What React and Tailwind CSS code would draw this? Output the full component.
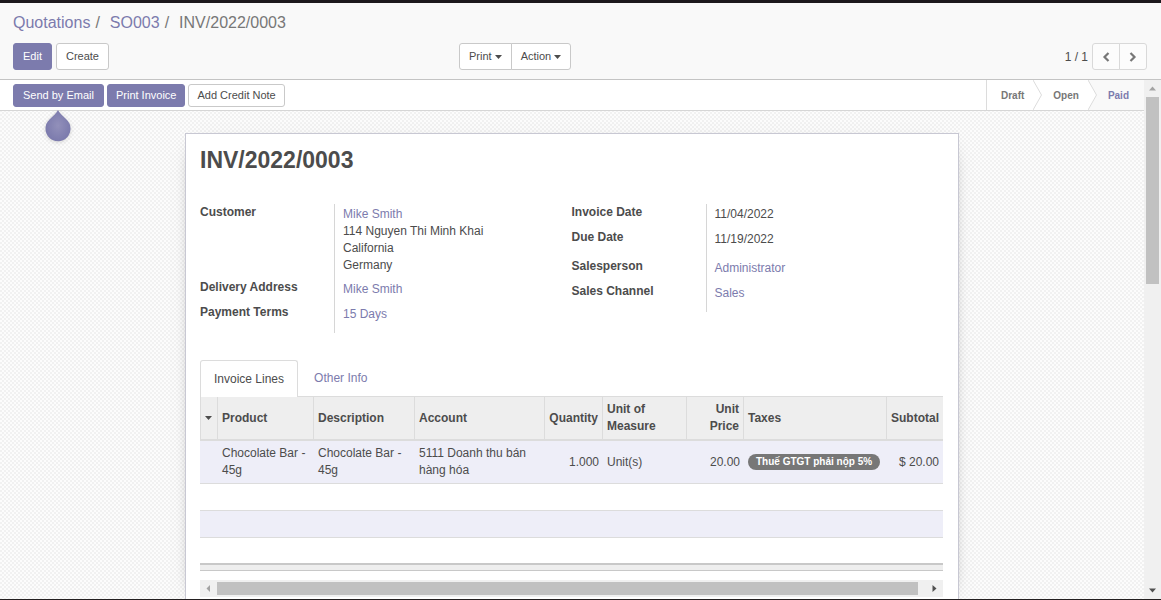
import React from "react";

const PRIMARY =
  "rounded-[3px] border border-[#7c7bad] bg-[#7c7bad] text-[11px] text-white";
const PLAIN =
  "rounded-[3px] border border-[#c9c9c9] bg-white text-[11px] text-[#4c4c4c]";
const LINK = "text-[#7c7bad]";

function Caret() {
  return (
    <svg width="7" height="4" viewBox="0 0 7 4" className="shrink-0" aria-hidden="true">
      <path d="M0 0h7L3.5 4z" fill="currentColor" />
    </svg>
  );
}

function Chevron({ d }) {
  return (
    <svg width="8" height="10" viewBox="0 0 8 10" aria-hidden="true">
      <path d={d} fill="none" stroke="currentColor" strokeWidth="2.2" />
    </svg>
  );
}

function Arrow({ d, className }) {
  return (
    <svg width="7" height="7" viewBox="0 0 7 7" className={className} aria-hidden="true">
      <path d={d} fill="currentColor" />
    </svg>
  );
}

const MENU =
  "flex h-[27px] items-center gap-[3px] border border-[#c9c9c9] bg-white px-[9px] text-[11px]";
const PAGER =
  "flex h-[27px] w-7 items-center justify-center border border-[#d9d9d9] bg-[#fcfcfc] text-[#777]";

function ControlPanel() {
  return (
    <header className="border-b border-[#c4c4c4] bg-[#f9f9f9] pt-2 pr-[14px] pb-[9px] pl-[13px]">
      <nav className="flex h-6 items-center text-[16px] text-[#777]">
        <a href="#quotations" className={LINK}>Quotations</a>
        <span className="pr-[10px] pl-[5px]">/</span>
        <a href="#so003" className={LINK}>SO003</a>
        <span className="pr-[10px] pl-[5px]">/</span>
        <span>INV/2022/0003</span>
      </nav>
      <div className="mt-2 grid grid-cols-[446px_1fr_auto] items-center">
        <div className="flex gap-1">
          <button className={`${PRIMARY} h-[27px] px-[9px]`}>Edit</button>
          <button className={`${PLAIN} h-[27px] px-[9px]`}>Create</button>
        </div>
        <div className="flex">
          <button className={`${MENU} rounded-l-[3px]`}>Print <Caret /></button>
          <button className={`${MENU} -ml-px rounded-r-[3px]`}>Action <Caret /></button>
        </div>
        <div className="flex items-center">
          <span className="pr-1">1 / 1</span>
          <button aria-label="Previous" className={`${PAGER} rounded-l-[3px]`}>
            <Chevron d="M6.500 1L2.500 5L6.500 9" />
          </button>
          <button aria-label="Next" className={`${PAGER} -ml-px rounded-r-[3px]`}>
            <Chevron d="M1.500 1L5.500 5L1.500 9" />
          </button>
        </div>
      </div>
    </header>
  );
}

function StepArrow({ next }) {
  return (
    <svg width="9" height="30" viewBox="0 0 9 30" className="shrink-0" aria-hidden="true">
      <rect width="9" height="30" fill={next} />
      <path d="M0 0L8.500 15L0 30z" fill="#fff" />
      <path d="M0 0L8.500 15L0 30" fill="none" stroke="#dcdcdc" />
    </svg>
  );
}

function StatusBar() {
  return (
    <div className="flex h-[31px] items-stretch justify-between border-b border-[#d6d6d6] bg-white">
      <div className="flex items-center gap-[3px] pl-[13px]">
        <div className="relative">
          <button className={`${PRIMARY} block h-[23px] px-[9px]`}>Send by Email</button>
          <svg
            width="33"
            height="38"
            viewBox="0 0 33 38"
            className="absolute top-full left-1/2 z-10 mt-[3px] -translate-x-1/2 drop-shadow-sm"
            aria-hidden="true"
          >
            <defs>
              <radialGradient id="drop">
                <stop offset="0" stopColor="#9290ba" />
                <stop offset="1" stopColor="#7c7bad" />
              </radialGradient>
            </defs>
            <path
              d="M16.500 0C18 3 21 5.500 25 9.500A12.500 12.500 0 1 1 8 9.500C12 5.500 15 3 16.500 0z"
              fill="url(#drop)"
            />
          </svg>
        </div>
        <button className={`${PRIMARY} h-[23px] px-2`}>Print Invoice</button>
        <button className={`${PLAIN} h-[23px] px-2`}>Add Credit Note</button>
      </div>
      <ol className="flex items-center border-l border-[#dcdcdc] text-[10px] font-bold text-[#777]">
        <li className="pr-[9px] pl-[14px]">Draft</li>
        <li className="flex items-center">
          <StepArrow next="#fff" />
          <span className="pr-[9px] pl-[11px]">Open</span>
        </li>
        <li className="flex items-center bg-[#f9f9f9]">
          <StepArrow next="#f9f9f9" />
          <span className={`${LINK} pr-[15px] pl-[11px]`}>Paid</span>
        </li>
      </ol>
    </div>
  );
}

function Field({ label, children, pad = "pb-[6px]" }) {
  return (
    <>
      <dt className="font-bold">{label}</dt>
      <dd className={`border-l border-[#d6d6d6] pt-[2px] pl-2 ${pad}`}>{children}</dd>
    </>
  );
}

const GROUP = "grid grid-cols-[134px_1fr] content-start leading-[17px]";

function Details() {
  return (
    <div className="mt-[29px] grid grid-cols-2">
      <dl className={GROUP}>
        <Field label="Customer" pad="pb-[5px]">
          <a href="#customer" className={LINK}>Mike Smith</a>
          <br />114 Nguyen Thi Minh Khai
          <br />California
          <br />Germany
        </Field>
        <Field label="Delivery Address"><a href="#delivery" className={LINK}>Mike Smith</a></Field>
        <Field label="Payment Terms" pad="pb-[10px]"><a href="#terms" className={LINK}>15 Days</a></Field>
      </dl>
      <dl className={GROUP}>
        <Field label="Invoice Date">11/04/2022</Field>
        <Field label="Due Date" pad="pb-[10px]">11/19/2022</Field>
        <Field label="Salesperson"><a href="#salesperson" className={LINK}>Administrator</a></Field>
        <Field label="Sales Channel" pad="pb-[10px]"><a href="#channel" className={LINK}>Sales</a></Field>
      </dl>
    </div>
  );
}

const TH = "border-r border-[#dcdcdc] px-1 font-bold";

function InvoiceLines() {
  return (
    <table className="w-full table-fixed border-separate border-spacing-0 text-left leading-[17px]">
      <colgroup>
        <col className="w-[18px]" />
        <col className="w-[96px]" />
        <col className="w-[101px]" />
        <col className="w-[130px]" />
        <col className="w-[58px]" />
        <col className="w-[84px]" />
        <col className="w-[57px]" />
        <col className="w-[143px]" />
        <col />
      </colgroup>
      <thead className="bg-[#eee]">
        <tr className="h-11 [&>th]:border-b-2 [&>th]:border-b-[#dcdcdc]">
          <th className="border-x border-[#dcdcdc] pl-1 align-middle" aria-label="Sort"><Caret /></th>
          <th className={TH}>Product</th>
          <th className={TH}>Description</th>
          <th className={TH}>Account</th>
          <th className={`${TH} text-right whitespace-nowrap`}>Quantity</th>
          <th className={TH}>Unit of Measure</th>
          <th className={`${TH} text-right`}>Unit Price</th>
          <th className={TH}>Taxes</th>
          <th className="px-1 text-right font-bold">Subtotal</th>
        </tr>
      </thead>
      <tbody className="[&_td]:border-b [&_td]:border-[#dcdcdc] [&_td]:px-1">
        <tr className="h-[43px] bg-[#eeeef8]">
          <td />
          <td>Chocolate Bar - 45g</td>
          <td>Chocolate Bar - 45g</td>
          <td>5111 Doanh thu bán hàng hóa</td>
          <td className="text-right">1.000</td>
          <td>Unit(s)</td>
          <td className="text-right">20.00</td>
          <td>
            <span className="inline-block h-4 rounded-full bg-[#777] px-2 align-middle text-[10px] leading-4 font-bold whitespace-nowrap text-white">
              Thuế GTGT phải nộp 5%
            </span>
          </td>
          <td className="text-right whitespace-nowrap">$ 20.00</td>
        </tr>
        <tr className="h-[27px]"><td colSpan={9} /></tr>
        <tr className="h-[27px] bg-[#eeeef8]"><td colSpan={9} /></tr>
      </tbody>
      <tfoot>
        <tr className="h-[25px]"><td colSpan={9} /></tr>
        <tr className="h-2"><td colSpan={9} className="border-t-2 border-b border-[#c8c8c8] bg-[#eee]" /></tr>
      </tfoot>
    </table>
  );
}

function Sheet() {
  return (
    <main className="mx-auto mt-[22px] w-full max-w-[774px] flex-1 border border-b-0 border-[#c8c8d3] bg-white pr-[15px] pl-[14px] shadow-[0_5px_20px_-15px_#000]">
      <h1 className="mt-3 text-[23px] leading-[29px] font-bold">INV/2022/0003</h1>
      <Details />
      <div role="tablist" className="mt-[27px] flex h-[37px] border-b border-[#dcdcdc]">
        <button role="tab" aria-selected="true" className="-mb-px rounded-t-[3px] border border-b-0 border-[#dcdcdc] bg-white px-[13px]">
          Invoice Lines
        </button>
        <button role="tab" aria-selected="false" className={`${LINK} px-4`}>Other Info</button>
      </div>
      <InvoiceLines />
      <div className="mt-[9px] flex h-[17px] items-center bg-[#f0f0f0]">
        <span className="flex w-[17px] justify-center"><Arrow d="M5 0v7L1.500 3.500z" className="text-[#a3a3a3]" /></span>
        <span className="h-[13px] flex-1 bg-[#c1c1c1]" />
        <span className="flex w-[25px] justify-end pr-[5px]"><Arrow d="M1.500 0v7L5.500 3.500z" className="text-[#505050]" /></span>
      </div>
    </main>
  );
}

export default function App() {
  return (
    <div className="flex h-screen flex-col overflow-hidden border-t-3 border-b border-t-[#1c181c] border-b-[#231f20] bg-white font-['Liberation_Sans',Arial,sans-serif] text-[12px] text-[#4c4c4c]">
      <ControlPanel />
      <div className="flex min-h-0 flex-1">
        <div className="flex min-w-0 flex-1 flex-col overflow-hidden bg-[#fcfcfc] bg-[repeating-conic-gradient(#f1f1f1_0_25%,#fcfcfc_0_50%)] bg-[length:4px_4px]">
          <StatusBar />
          <Sheet />
        </div>
        <div className="flex w-[17px] flex-col items-center bg-[#f0f0f0]">
          <span className="flex h-[17px] items-center"><Arrow d="M0 5.500h7L3.500 1.500z" className="text-[#a3a3a3]" /></span>
          <span className="h-[187px] w-[13px] bg-[#c1c1c1]" />
          <span className="mt-auto flex h-[17px] items-center"><Arrow d="M0 1.500h7L3.500 5.500z" className="text-[#505050]" /></span>
        </div>
      </div>
    </div>
  );
}
